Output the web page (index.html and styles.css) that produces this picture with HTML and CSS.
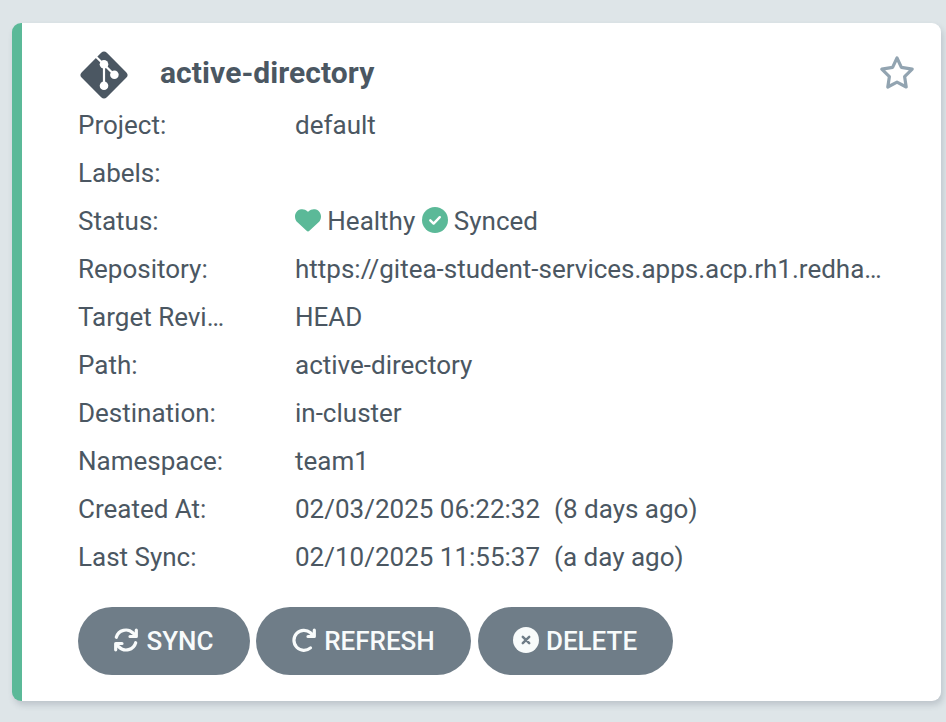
FILE: index.html
```html
<!DOCTYPE html>
<html lang="en">
<head>
<meta charset="utf-8">
<title>Applications</title>
<link rel="stylesheet" href="styles.css">
</head>
<body>
<article class="card">
  <header class="head">
    <svg class="git" viewBox="0 0 48 48"><rect x="6.300" y="6.300" width="35.400" height="35.400" rx="4" transform="rotate(45 24 24)" fill="currentColor"/><path d="M15.500 5.200 24 13.500 34.300 23.800M24 13.500V34.700" fill="none" stroke="#fff" stroke-width="2.200"/><g fill="#fff"><circle cx="24" cy="13.300" r="4.300"/><circle cx="34.400" cy="23.800" r="4.300"/><circle cx="24" cy="34.700" r="4.300"/></g></svg>
    <h1 class="title">active-directory</h1>
    <svg class="star" viewBox="0 0 34 34"><path d="M17 2 21.400 11.400 32.200 13.100 24.600 20.600 26.200 31 17 26.200 7.800 31 9.400 20.600 1.800 13.100 12.600 11.400Z" fill="none" stroke="currentColor" stroke-width="3.200" stroke-linejoin="round"/></svg>
  </header>
  <dl class="rows">
    <dt>Project:</dt><dd>default</dd>
    <dt>Labels:</dt><dd></dd>
    <dt>Status:</dt>
    <dd class="status">
      <svg class="icon" viewBox="0 0 512 512"><path fill="currentColor" d="M47.600 300.400 228.300 469.100c7.500 7 17.400 10.900 27.700 10.900s20.200-3.900 27.700-10.900L464.400 300.400c30.400-28.300 47.600-68 47.600-109.500v-5.800c0-69.900-50.500-129.500-119.400-141C347 36.500 300.600 51.400 268 84L256 96 244 84c-32.600-32.600-79-47.500-124.600-39.900C50.500 55.600 0 115.200 0 185.100v5.800c0 41.500 17.200 81.200 47.600 109.500z"/></svg>
      <span class="state">Healthy</span>
      <svg class="icon" viewBox="0 0 26 26"><circle cx="13" cy="13" r="13" fill="currentColor"/><path d="M8.300 13.300 11.600 16.600 17.800 10.200" fill="none" stroke="#fff" stroke-width="2.400" stroke-linecap="round" stroke-linejoin="round"/></svg>
      <span class="state">Synced</span>
    </dd>
    <dt>Repository:</dt><dd>https://gitea-student-services.apps.acp.rh1.redha…</dd>
    <dt>Target Revi…</dt><dd>HEAD</dd>
    <dt>Path:</dt><dd>active-directory</dd>
    <dt>Destination:</dt><dd>in-cluster</dd>
    <dt>Namespace:</dt><dd>team1</dd>
    <dt>Created At:</dt><dd>02/03/2025 06:22:32<span class="ago">(8 days ago)</span></dd>
    <dt>Last Sync:</dt><dd>02/10/2025 11:55:37<span class="ago">(a day ago)</span></dd>
  </dl>
  <footer class="actions">
    <button class="btn sync"><svg class="icon" viewBox="0 0 26 26"><g fill="none" stroke="currentColor" stroke-width="3.200" stroke-linecap="round" stroke-linejoin="round"><path d="M3.300 10.300A10 10 0 0 1 20 6L23 9.200M23.300 3.200V9.500H17M22.700 15.700A10 10 0 0 1 6 20L3 16.800M2.700 22.800V16.500H9"/></g></svg>SYNC</button>
    <button class="btn refresh"><svg class="icon" viewBox="0 0 26 26"><path d="M23.300 3.200V9.500H17M22.700 9.200 19.500 5.800A10 10 0 1 0 19.500 20.900" fill="none" stroke="currentColor" stroke-width="3.200" stroke-linecap="round" stroke-linejoin="round"/></svg>REFRESH</button>
    <button class="btn delete"><svg class="icon" viewBox="0 0 26 26"><circle cx="13" cy="13" r="13" fill="currentColor"/><path d="M9.800 9.800 16.200 16.200M16.200 9.800 9.800 16.200" stroke="#6f7d88" stroke-width="2.500" stroke-linecap="round"/></svg>DELETE</button>
  </footer>
</article>
</body>
</html>
```
FILE: styles.css
```css
* { box-sizing: border-box; }
body {
  margin: 0;
  padding: 23px 5px 21px 12px;
  background: #dee5e8;
  color: #4b5762;
  font: 26px/48px Roboto, "Liberation Sans", sans-serif;
  overflow: hidden;
}
.card {
  height: 678px;
  padding: 26px 27px 0 56px;
  border-left: 10px solid #5bb998;
  border-radius: 9px;
  background: #fff;
  box-shadow: 2px 4px 6px rgba(60, 70, 90, .2);
}
.head { display: flex; height: 52px; }
.git { width: 48px; height: 48px; margin: 2px 32px 0 2px; }
.title { margin: 0; font-size: 30px; line-height: 48px; font-weight: 700; letter-spacing: .07px; }
.star { width: 34px; height: 34px; margin: 6.500px 0 0 auto; color: #92a4b1; overflow: visible; }
.rows { display: grid; grid-template-columns: 150px 592px; column-gap: 67px; grid-auto-rows: 48px; margin: 0; }
dt, dd { margin: 0; white-space: nowrap; }
.ago { margin-left: 14px; }
.status { display: flex; align-items: center; }
.icon { width: 26px; height: 26px; flex: none; }
.status .icon { color: #5bb998; margin-top: -2px; }
.state { margin: 0 6.300px; }
.actions { display: flex; margin-top: 26px; }
.btn {
  display: flex;
  align-items: center;
  justify-content: center;
  gap: 7px;
  height: 68px;
  padding: 0 1px 0 0;
  border: 0;
  border-radius: 34px;
  background: #6f7d88;
  color: #f8fbfb;
  font: 500 26px/68px Roboto, "Liberation Sans", sans-serif;
}
.btn .icon { margin-top: -2px; }
.sync { width: 172px; margin-right: 6px; }
.refresh { width: 215px; margin-right: 7px; }
.delete { width: 195px; }
```
